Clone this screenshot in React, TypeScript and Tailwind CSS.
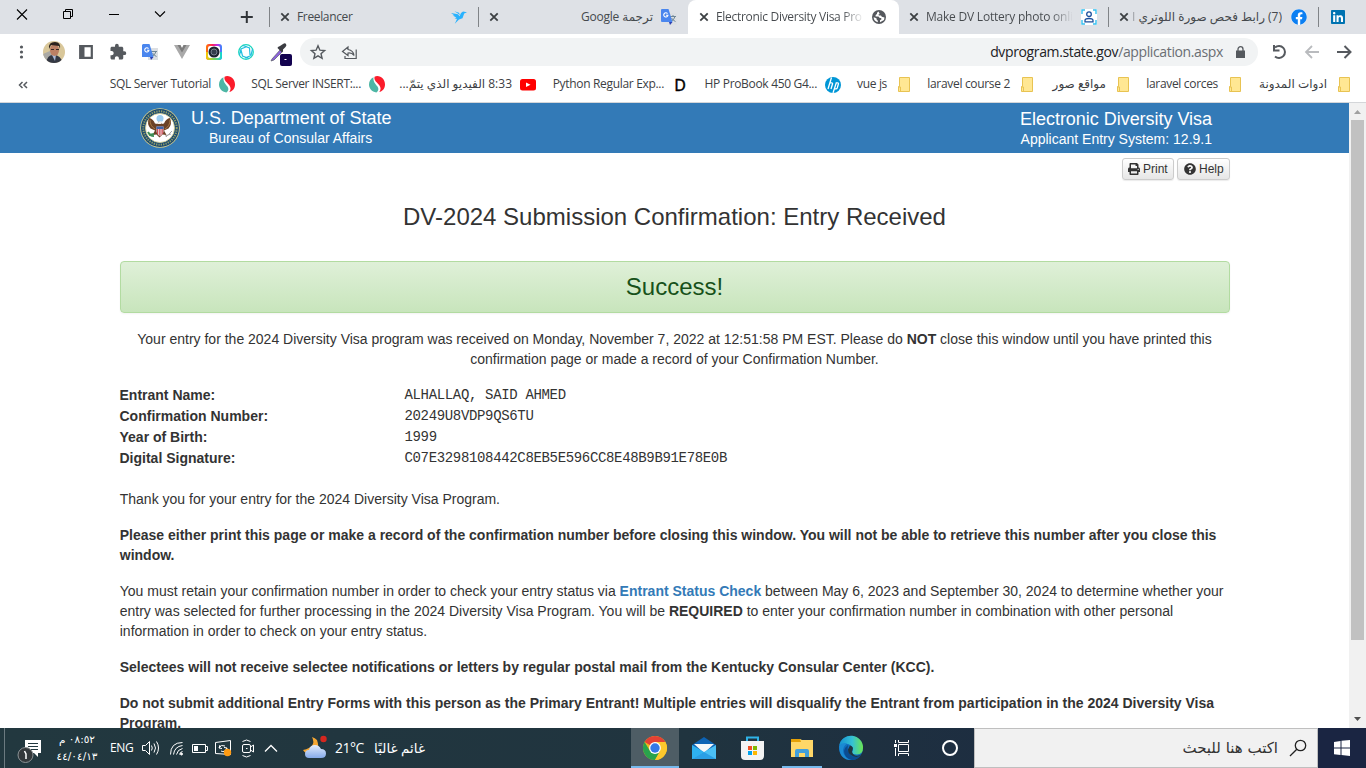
import React from "react";
import { FaPrint, FaQuestionCircle, FaFacebook, FaLinkedin } from "react-icons/fa";
import { MdExtension } from "react-icons/md";

type Kids = { children?: React.ReactNode };

const Close = () => (
  <svg width="10" height="10" viewBox="0 0 10 10" className="shrink-0" stroke="#3c4043" strokeWidth="1.8">
    <path d="M1.3 1.3 8.7 8.7M8.7 1.3 1.3 8.7" />
  </svg>
);

const Translate = () => (
  <svg width="16" height="16" viewBox="0 0 16 16" className="shrink-0">
    <rect x="6" y="4" width="10" height="12" rx="1" fill="#dcdfe3" />
    <path d="M9 7.500h6M12 6v1.5M14 7.500q-1 3.500-4 5M10.500 9q1.500 2.500 4 3.500" stroke="#6f8797" fill="none" />
    <path d="M8 13h3.500L9 16z" fill="#2c3fb0" />
    <path d="M1 0h6.500L11.500 13H1a1 1 0 0 1-1-1V1a1 1 0 0 1 1-1z" fill="#4a86ee" />
    <path d="M6.500 4.600A2.100 2.100 0 1 0 6.900 6.300H5" stroke="#fff" strokeWidth="1.100" fill="none" />
  </svg>
);

const Bird = () => (
  <svg width="16" height="13" viewBox="0 0 16 13" className="shrink-0" fill="#29b2fe">
    <path d="M0 2 7 3.200 8.500 5.300 10 2 12 .6 16 1.200 13.200 2.400 11.500 7.200 8 8.600 3.800 12.800 6 8 3.600 7.200 5.400 6.600 1.600 4.500 3.500 4.400z" />
    <path d="M3.500.2 8 1.700 9 4.200 7.200 2.800z" />
  </svg>
);

const Globe = () => (
  <svg width="14" height="14" viewBox="0 0 14 14" className="ml-auto shrink-0">
    <circle cx="7" cy="7" r="7" fill="#55585d" />
    <path d="M6.500 1.600 5 2.700 5 4 3.600 5v1.600h2.600q1.300.2 1.300 1.400h1.200q1 .2.800 1.200L8 10.300v2l4-2.200.5-2.700-2.700-.7-.8-1.300-2 .2L6.300 4.700l1.400-.8z" fill="#fff" />
    <path d="M1.600 7.300q1.800.1 3 1.300l.2 1.500 1 .5v1.700Q1.800 11.400 1.600 7.300z" fill="#fff" />
  </svg>
);

const PersonScan = () => (
  <svg width="16" height="16" viewBox="0 0 16 16" className="shrink-0">
    <rect width="16" height="16" fill="#fff" />
    <path d="M1 5V1h3M12 1h3v4M15 11v4h-3M4 15H1v-4" stroke="#35c0f0" strokeWidth="1.400" fill="none" />
    <circle cx="8" cy="5.200" r="2.300" stroke="#1b4f9c" strokeWidth="1.300" fill="none" />
    <path d="M4 12.800v-1.300q0-2 4-2t4 2v1.300z" stroke="#1b4f9c" strokeWidth="1.300" fill="none" />
  </svg>
);

const Swirl = () => (
  <svg width="16" height="17" viewBox="0 0 16 17" className="shrink-0">
    <path d="M4.500 1.300C1.500 2.600 0 5.300 0 8.500c0 4 2.800 7.300 7.300 8 2.200-1.300 2.800-3.700 1-6.200C6.500 8 3.800 5.500 4.500 1.300z" fill="#4db6a5" />
    <path d="M5.600.8C6.500.3 7.200.1 8.200.1 12.700.3 16 3.900 16 8.400s-3 7-5.700 7.500C12 14 12 11.700 10.300 9.300 8.300 6.600 4.500 4.500 5.600.8z" fill="#fb1c2b" />
  </svg>
);

const Folder = () => (
  <svg width="12" height="15" viewBox="0 0 12 15" className="shrink-0">
    <path d="M1.500.5h10v14h-11V9.500h1z" fill="#ffe793" stroke="#e8c352" />
    <path d="M.5 10h2v4.500" fill="none" stroke="#e8c352" />
  </svg>
);

const Seal = () => (
  <svg width="40" height="40" viewBox="0 0 40 40" className="ml-[140px] mt-[5px] shrink-0">
    <circle cx="20" cy="20" r="19.800" fill="#d9d08b" />
    <circle cx="20" cy="20" r="19" fill="#1c4a70" />
    <circle cx="20" cy="20" r="16.700" fill="none" stroke="#8f9d68" strokeWidth="2" strokeDasharray="1.300 1.100" />
    <circle cx="20" cy="20" r="14.500" fill="#fff" stroke="#d9d08b" strokeWidth=".8" />
    <circle cx="20" cy="10.500" r="3.500" fill="#9ccdf0" />
    <path d="M19 13.500q-1.500 1-1.300 2.500L15 15.500q-2-5-6-5.500-2.500 6 1.500 10.500l4.500 2-2.500 4.500 4-.5 3 3 3-3 4 .5-2.500-4.500 4.500-2q4-4.500 1.500-10.500-4 .5-6 5.500l-2.300.5q0-2.500-3.200-2.500z" fill="#6b4226" />
    <path d="M10 12q0 6 5 9M30 12q0 6-5 9" stroke="#a87945" fill="none" />
    <path d="M16.500 18.500h7V24q-1 3-3.500 4-2.500-1-3.500-4z" fill="#e8e3e4" />
    <path d="M17.500 21v5M19.300 21v6.500M21 21v6.500M22.700 21v5" stroke="#d13b48" strokeWidth=".9" />
    <path d="M16.500 18.500h7V21h-7z" fill="#3f62a8" />
    <path d="M8 24q2 4 6 4M9 27l5-1" stroke="#3e8d55" strokeWidth="2" fill="none" />
    <path d="M32 23l-6 6M31 26l-6 2" stroke="#a9a9a9" />
    <path d="M18 14.500l2-1.500 2 1-1 2h-3z" fill="#f4f1ea" />
  </svg>
);

function Tab({ w, children }: { w: string } & Kids) {
  return <div className={`flex h-[34px] shrink-0 items-center overflow-hidden whitespace-nowrap ${w}`}>{children}</div>;
}

function Mark({ w, t, children, rtl }: { w: string; t: string; rtl?: string } & Kids) {
  return (
    <div className={`flex shrink-0 items-center justify-end gap-2 whitespace-nowrap ${w}`}>
      <span dir={rtl ? "rtl" : "ltr"} className={rtl ? `relative -top-px font-['Open_Sans','DejaVu_Sans',sans-serif] ${rtl}` : "relative -top-px"}>{t}</span>
      {children}
    </div>
  );
}

function BrowserTabs() {
  return (
    <div className="flex h-[34px] bg-[#dee1e6] text-[12px] tracking-[-0.2px] text-[#45494d]">
      <svg width="269" height="34" viewBox="0 0 269 34" className="shrink-0" fill="none" stroke="#000">
        <path d="M17 9.500l10 10M27 9.500l-10 10" strokeWidth="1.100" />
        <path d="M63.500 11.500h7v7h-7zM65.500 11.500v-2h7v7h-2M109 14.500h10" />
        <path d="M155 11.500l5 5 5-5" strokeWidth="1.100" />
        <path d="M246.800 11v12M240.800 17h12" stroke="#303438" strokeWidth="2" />
      </svg>
      <div className="mt-[7px] h-5 w-px bg-[#808387]" />
      <Tab w="w-[208px] pl-[10px] pr-[11px]">
        <Close /><span className="ml-[7px] flex-1 tracking-[-0.350px]">Freelancer</span><Bird />
      </Tab>
      <div className="mt-[7px] h-5 w-px bg-[#808387]" />
      <Tab w="w-[209px] pl-[10px] pr-[11px]">
        <Close /><span dir="rtl" className="flex-1 pr-2 text-right">ترجمة Google</span><Translate />
      </Tab>
      <div className="flex h-[34px] w-[211px] shrink-0 items-center rounded-t-lg bg-white pl-[11px] pr-[13px]">
        <Close />
        <span className="ml-[7px] w-[148px] overflow-hidden whitespace-nowrap bg-linear-to-r from-[#45494d] from-85% to-transparent bg-clip-text tracking-[-0.300px] text-transparent">Electronic Diversity Visa Pro</span>
        <Globe />
      </div>
      <Tab w="w-[209px] pl-[10px] pr-[11px] rounded-bl-lg">
        <Close />
        <span className="ml-[7px] w-[147px] overflow-hidden bg-linear-to-r from-[#45494d] from-85% to-transparent bg-clip-text tracking-[-0.220px] text-transparent">Make DV Lottery photo onli</span>
        <span className="ml-auto"><PersonScan /></span>
      </Tab>
      <div className="mt-[7px] h-5 w-px bg-[#808387]" />
      <Tab w="w-[209px] pl-[10px] pr-[11px]">
        <Close />
        <span dir="rtl" className="ml-1 mr-[9px] flex-1 overflow-hidden text-[12px] tracking-[-0.300px]">(7) رابط فحص صورة اللوتري <span className="opacity-40">ا</span></span>
        <span className="rounded-full bg-white"><FaFacebook size={16} className="text-[#0c7ff2]" /></span>
      </Tab>
      <div className="mt-[7px] h-5 w-px bg-[#808387]" />
      <div className="ml-3 mt-[10px] flex h-[14px] w-[14px] items-center justify-center bg-white">
        <FaLinkedin size={16} className="shrink-0 text-[#0073b1]" />
      </div>
    </div>
  );
}

function Toolbar() {
  return (
    <div className="flex h-[34px] shrink-0 items-center bg-white pt-[2px]">
      <svg width="108" height="30" viewBox="0 0 108 30" className="shrink-0">
        <g fill="#55595e"><circle cx="21.500" cy="10" r="1.600" /><circle cx="21.500" cy="15" r="1.600" /><circle cx="21.500" cy="20" r="1.600" /></g>
        <clipPath id="face"><circle cx="54" cy="15" r="11" /></clipPath>
        <g clipPath="url(#face)">
          <rect x="43" y="3" width="22" height="24" fill="#d9c79a" />
          <path d="M43 17l7-3 7 12H43z" fill="#aaa9a5" />
          <path d="M46 27q1-10 8-9 7 0 9 9z" fill="#343844" />
          <path d="M52 18h4l-1 6z" fill="#a9b8d8" />
          <ellipse cx="54.500" cy="13" rx="4.600" ry="6" fill="#bb7f64" />
          <path d="M49 12q-1-7 6-7 6 0 5 7l-1-3-8-1z" fill="#2b211d" />
          <path d="M51 12.500h3M56 12.500h3" stroke="#3a2722" />
        </g>
        <path d="M80.200 9.200h11.600v11.600H80.200z" fill="none" stroke="#55595e" strokeWidth="2.200" />
        <path d="M80 9h4.500v12H80z" fill="#55595e" />
      </svg>
      <MdExtension size={18} className="ml-px shrink-0 text-[#55595e]" />
      <svg width="173" height="30" viewBox="127 0 173 30" className="shrink-0">
        <g transform="translate(142 7)">
          <rect x="6" y="4" width="10" height="12" fill="#dcdfe3" />
          <path d="M9 7.500h6M14 7.500q-1 3.500-4 5M10.500 9q1.500 2.500 4 3.500" stroke="#6f8797" fill="none" />
          <path d="M8 13h3.500L9 16z" fill="#2c3fb0" />
          <path d="M1 0h6.500L11.500 13H0V1z" fill="#4a86ee" />
          <path d="M6.500 4.600A2.100 2.100 0 1 0 6.900 6.300H5" stroke="#fff" strokeWidth="1.100" fill="none" />
        </g>
        <path d="M174 8h6l2 4 2-4h6l-8 14z" fill="#a9a9a9" />
        <path d="M177.500 8h3l1.500 3 1.500-3h3l-4.500 7.500z" fill="#7c7c7c" />
        <linearGradient id="rg" x1="0" y1="0" x2="1" y2="0"><stop stopColor="#ff7a00" /><stop offset=".4" stopColor="#ff1f5e" /><stop offset=".7" stopColor="#c02be6" /><stop offset="1" stopColor="#2f8fff" /></linearGradient>
        <linearGradient id="rg2" x1="0" y1="0" x2="1" y2="0"><stop stopColor="#ffc400" /><stop offset=".5" stopColor="#7bd85a" /><stop offset="1" stopColor="#11d3d8" /></linearGradient>
        <rect x="206" y="7" width="16" height="16" rx="3" fill="url(#rg)" />
        <path d="M206 15h16v5a3 3 0 0 1-3 3h-10a3 3 0 0 1-3-3z" fill="url(#rg2)" />
        <rect x="208" y="9" width="12" height="12" rx="2" fill="#fff" />
        <circle cx="214" cy="15" r="5.500" fill="#1d2430" /><circle cx="214" cy="15" r="3" fill="#343d4c" stroke="#8a92a0" strokeWidth=".8" />
        <g fill="none" stroke="#1ad6bd" strokeWidth="1.300"><circle cx="246" cy="15" r="7.300" /><path d="M243 8.500l6.500 2.500.5 7M252.500 12l-1.500 6.500-6 2.500M249 21.500l-6.500-2.500-1.500-6M239.500 18l1.500-6 6-2.500" stroke="#22bfe0" strokeWidth="1.200" /></g>
        <path d="M272 22l8-9 2 2-8 8-3 1z" fill="#8c62dc" stroke="#575b66" strokeWidth=".7" />
        <path d="M278 10l2-1 3-2q2-1.500 3 0t-.5 3l-2.500 2.500v2l-1 1-4.500-4.500z" fill="#3b3c42" />
        <rect x="280" y="17" width="12" height="12" rx="2" fill="#13024f" /><path d="M284.500 22.500h2" stroke="#fff" />
      </svg>
      <div className="flex h-7 w-[958px] items-center rounded-full bg-[#f1f3f4]">
        <svg width="60" height="28" viewBox="0 0 60 28" fill="none" stroke="#55595e" strokeWidth="1.400" className="shrink-0">
          <path d="M18 7.800l1.900 4.400 4.700.4-3.600 3.100 1.100 4.600-4.100-2.500-4.100 2.500 1.100-4.600-3.600-3.100 4.700-.4z" />
          <path d="M48 9l-5.500 4.500 5.500 4v-2.500q4-.5 6 2.500-.5-5-6-6zM45 18v2.500h11.200v-9" strokeWidth="1.200" />
        </svg>
        <span className="relative -top-px ml-auto text-[14px] tracking-[-0.370px] text-[#6a6e73]"><span className="text-[#202124]">dvprogram.state.gov</span>/application.aspx</span>
        <svg width="9" height="12" viewBox="0 0 9 12" className="mb-px ml-[13px] mr-[13px]"><path d="M0 4.500h9V12H0z" fill="#55595e" /><path d="M2 5V3.200a2.500 2.500 0 0 1 5 0V5" stroke="#55595e" strokeWidth="1.300" fill="none" /></svg>
      </div>
      <svg width="108" height="28" viewBox="0 0 108 28" fill="none" stroke="#55595e" strokeWidth="2" className="shrink-0">
        <path d="M17 9.500A6 6 0 1 1 17 18.500" /><path d="M16 7v5.500h5.500" />
        <path d="M61 14H48.500M54 8l-6 6 6 6" stroke="#b9bbbe" strokeWidth="1.800" />
        <path d="M79 14h13M86.500 8l6 6-6 6" />
      </svg>
    </div>
  );
}

function Bookmarks() {
  return (
    <div className="flex h-[35px] items-center border-b border-[#d4d6d9] bg-white pb-[1px] text-[12px] tracking-[-0.320px] text-[#3c4043]">
      <svg width="30" height="10" viewBox="0 0 30 10" fill="none" stroke="#55595e" strokeWidth="1.500" className="shrink-0"><path d="M22.500 2l-3 3 3 3M27 2l-3 3 3 3" /></svg>
      <Mark w="w-[205px]" t="SQL Server Tutorial"><Swirl /></Mark>
      <Mark w="w-[150px]" t="SQL Server INSERT:..."><Swirl /></Mark>
      <Mark w="w-[151px]" t="8:33 الفيديو الذي يتمّ..." rtl="text-[12px] tracking-[-0.480px]">
        <svg width="16" height="12" viewBox="0 0 16 12" className="shrink-0"><rect width="16" height="11.500" rx="2.500" fill="#f00" /><path d="M6 3.500l4.500 2.300L6 8z" fill="#fff" /></svg>
      </Mark>
      <Mark w="w-[152px]" t="Python Regular Exp..."><span className="w-4 text-center font-['Noto_Sans',sans-serif] text-[16px] leading-4 text-black [-webkit-text-stroke:0.4px_black]">D</span></Mark>
      <Mark w="w-[153px]" t="HP ProBook 450 G4...">
        <svg width="16" height="16" viewBox="0 0 16 16" className="shrink-0" fill="none" stroke="#fff" strokeWidth="1.300">
          <circle cx="8" cy="8" r="8" fill="#0096d6" stroke="none" />
          <path d="M6.500.5L3 12M5 5.800h1.500q1.300 0 1 1.200L6 12M11.500 5.200L8 16M11 5.800h1.500q1.200 0 .9 1.200L12.200 11q-.3.800-1.200.8H9.500" />
        </svg>
      </Mark>
      <div className="flex gap-0 [&>div]:gap-[11px]">
        <Mark w="w-[69px]" t="vue js"><Folder /></Mark>
        <Mark w="w-[123px]" t="laravel course 2"><Folder /></Mark>
        <Mark w="w-[96px]" t="مواقع صور" rtl="text-[12px] tracking-[-0.200px]"><Folder /></Mark>
        <Mark w="w-[112px]" t="laravel corces"><Folder /></Mark>
        <Mark w="w-[109px]" t="ادوات المدونة" rtl="text-[12px] tracking-[-0.200px]"><Folder /></Mark>
      </div>
    </div>
  );
}

function Row({ k, v }: { k: string; v: string }) {
  return (
    <div className="flex h-[21px] items-center pb-px">
      <dt className="w-[285px] font-bold">{k}</dt>
      <dd className="pb-px font-['Liberation_Mono',monospace] text-[14px] tracking-[-0.340px]">{v}</dd>
    </div>
  );
}

const btn = "flex h-[22px] items-center rounded-[3px] border border-[#ccc] bg-linear-to-b from-white to-[#e6e6e6] text-[12px] text-[#333] shadow-[0_1px_1px_rgba(0,0,0,0.08)]";

function Page() {
  return (
    <div className="flex h-[625px] overflow-hidden bg-white">
      <main className="w-[1349px] shrink-0 font-['Liberation_Sans',Arial,sans-serif] text-[14px] leading-5 text-[#333]">
        <header className="flex h-[50px] bg-[#337ab7] text-white">
          <Seal />
          <div className="ml-[11px] mt-1 whitespace-nowrap"><div className="text-[18px] leading-[22px] tracking-[-0.030px]">U.S. Department of State</div><div className="ml-[18px] leading-[18px]">Bureau of Consular Affairs</div></div>
          <div className="ml-auto mr-[137px] mt-[5px] whitespace-nowrap text-right"><div className="text-[18px] leading-[22px] tracking-[-0.030px]">Electronic Diversity Visa</div><div className="leading-[18px]">Applicant Entry System: 12.9.1</div></div>
        </header>
        <div className="mx-[120px] w-[1110px]">
          <div className="flex justify-end gap-[3px] pt-[5px]">
            <button className={`${btn} w-[52px] gap-[3px] pl-[5px]`}><FaPrint size={12} />Print</button>
            <button className={`${btn} w-[53px] gap-[3px] pl-[6px]`}><FaQuestionCircle size={12} />Help</button>
          </div>
          <h1 className="mt-[22px] pr-px text-center text-[24px] leading-[30px]">DV-2024 Submission Confirmation: Entry Received</h1>
          <div className="mt-[29px] flex h-[52px] items-center justify-center rounded border border-[#b2dba1] bg-linear-to-b from-[#dff0d8] to-[#c8e5bc] pr-px text-[24px] text-[#17511a] shadow-[0_1px_2px_rgba(0,0,0,0.05)]">Success!</div>
          <p className="mt-4 pr-px text-center">Your entry for the 2024 Diversity Visa program was received on Monday, November 7, 2022 at 12:51:58 PM EST. Please do <b>NOT</b> close this window until you have printed this<br />confirmation page or made a record of your Confirmation Number.</p>
          <dl className="-ml-[0.500px] mt-4">
            <Row k="Entrant Name:" v="ALHALLAQ, SAID AHMED" />
            <Row k="Confirmation Number:" v="20249U8VDP9QS6TU" />
            <Row k="Year of Birth:" v="1999" />
            <Row k="Digital Signature:" v="C07E3298108442C8EB5E596CC8E48B9B91E78E0B" />
          </dl>
          <div className="-ml-[0.250px] mt-5 flex flex-col gap-4 whitespace-nowrap">
            <p>Thank you for your entry for the 2024 Diversity Visa Program.</p>
            <p className="font-bold">Please either print this page or make a record of the confirmation number before closing this window. You will not be able to retrieve this number after you close this<br />window.</p>
            <p>You must retain your confirmation number in order to check your entry status via <b className="text-[#337ab7]">Entrant Status Check</b> between May 6, 2023 and September 30, 2024 to determine whether your<br />entry was selected for further processing in the 2024 Diversity Visa Program. You will be <b>REQUIRED</b> to enter your confirmation number in combination with other personal<br />information in order to check on your entry status.</p>
            <p className="font-bold">Selectees will not receive selectee notifications or letters by regular postal mail from the Kentucky Consular Center (KCC).</p>
            <p className="font-bold">Do not submit additional Entry Forms with this person as the Primary Entrant! Multiple entries will disqualify the Entrant from participation in the 2024 Diversity Visa<br />Program.</p>
          </div>
        </div>
      </main>
      <div className="flex w-[17px] flex-col items-center bg-[#f1f1f1]">
        <svg width="17" height="17" viewBox="0 0 17 17"><path d="M5 11l3.500-4L12 11z" fill="#a0a0a0" /></svg>
        <div className="h-[520px] w-[13px] bg-[#c1c1c1]" />
        <svg width="17" height="17" viewBox="0 0 17 17" className="mt-auto"><path d="M5 6l3.500 4L12 6z" fill="#505050" /></svg>
      </div>
    </div>
  );
}

function Taskbar() {
  return (
    <div className="flex h-10 bg-linear-to-r from-[#22383f] via-[#20343f] to-[#1a2542] text-white">
      <svg width="50" height="40" viewBox="0 0 50 40" className="shrink-0">
        <path d="M4.500 0v40" stroke="#6b7a80" />
        <path d="M25 12h16v13h-3v4l-4-4h-9z" fill="#fff" />
        <path d="M28 15.500h10M28 18.500h10M31 21.500h7" stroke="#22383f" />
        <circle cx="25.500" cy="27" r="7.500" fill="#33383b" stroke="#8b9295" /><path d="M24.500 23l1.500 3v5" stroke="#fff" fill="none" strokeWidth="1.500" />
      </svg>
      <div className="flex w-[54px] shrink-0 flex-col items-center whitespace-nowrap pt-[3px] font-['DejaVu_Sans',sans-serif] text-[10.500px] leading-[17px] tracking-[-0.400px]">
        <span dir="rtl">٠٨:٥٢ م</span><span dir="ltr">٤٤/٠٤/١٣</span>
      </div>
      <span className="ml-[6px] w-[31px] shrink-0 text-[12px] leading-[39px] tracking-[-0.400px]">ENG</span>
      <svg width="155" height="40" viewBox="0 0 155 40" className="shrink-0" fill="none" stroke="#fff">
        <path d="M1.500 17.500h3l4-4v13l-4-4h-3zM10.500 17.500q1.500 2.500 0 5M13 15.500q3 4.500 0 9M15.500 13.500q4 6.500 0 13" />
        <path d="M29.500 26.500q0-12 12-12M32.500 26.500q1-8 9-9M35.500 26.500q1-5 6-6M38.500 26.500q.5-2.500 3-3" />
        <circle cx="40.500" cy="26" r="1" fill="#fff" />
        <path d="M51.500 16.500h13v8h-13zM64.500 18.500h2v4h-2" /><path d="M53 18h4v5h-4z" fill="#fff" stroke="none" />
        <path d="M74.500 14.500l15-2v14l-15-1zM79 17l-1 3 3 .5M85 23l1-3-3-.5M78 20q2-4 6-2M86 20q-2 5-6 3" />
        <circle cx="86.500" cy="24.500" r="3.700" fill="#ff9b13" stroke="none" />
        <rect x="101.500" y="16.500" width="8" height="8" rx="1.500" /><path d="M109.500 19l3-2v7l-3-2M101.500 13.500q4-3 8 0M101.500 27.500q4 3 8 0" /><path d="M105 20.500h1.500" />
        <path d="M124 23.500l6-6 6 6" strokeWidth="1.300" />
      </svg>
      <svg width="26" height="40" viewBox="0 0 26 40" className="ml-[6px] shrink-0">
        <path d="M10 9q5 10-9 13 3 5 9 4 9-2 5-14-2-2-5-3z" fill="#f5a733" />
        <linearGradient id="cl" x2="0" y2="1"><stop stopColor="#e3edfd" /><stop offset="1" stopColor="#85aaea" /></linearGradient>
        <path d="M7 30a4 4 0 0 1 0-8q1-5 6-5 4 0 6 4 5 0 5 4.500T19 30z" fill="url(#cl)" />
        <circle cx="21.500" cy="11" r="3.200" fill="#d5271f" />
      </svg>
      <span className="ml-[7px] w-[30px] shrink-0 whitespace-nowrap text-[14px] leading-[40px] tracking-[-0.500px]">21°C</span>
      <span dir="rtl" className="ml-[7px] w-[53px] shrink-0 whitespace-nowrap text-[13.500px] leading-[40px] tracking-[-0.200px]">غائم غالبًا</span>
      <svg width="342" height="40" viewBox="0 0 342 40" className="ml-auto shrink-0">
        <path d="M0 0h48v40H0z" fill="#4e5d65" /><path d="M0 38h48v2H0zM151 38h40v2h-40z" fill="#76b9ed" />
        <circle cx="24" cy="20" r="12" fill="#e9ba20" />
        <path d="M24 20L13.600 14A12 12 0 0 1 34.400 14z" fill="#e44134" />
        <path d="M13.600 14A12 12 0 0 0 24 32l5-9-10 0z" fill="#29a34c" />
        <path d="M24 14h10.400A12 12 0 0 1 24 32l5.200-9z" fill="#fdc82c" />
        <circle cx="24" cy="20" r="5.900" fill="#fff" /><circle cx="24" cy="20" r="4.700" fill="#3478e8" />
        <path d="M61 17l12-8 12 8v14H61z" fill="#0d63b4" /><path d="M63 16h20l-10 9z" fill="#f5f7f8" /><path d="M61 17l12 7v7H61z" fill="#2eb1f0" /><path d="M85 17L61 31h24z" fill="#4bc0f5" /><path d="M61 31l12-7 12 7z" fill="#2a9fe6" />
        <path d="M116 14V9.500h11V14" fill="none" stroke="#2fb3e8" strokeWidth="2" />
        <path d="M110 13h23v15q0 4-4 4h-15q-4 0-4-4z" fill="#f3f3f3" />
        <path d="M117 18h4v4h-4z" fill="#f04e24" /><path d="M122 18h4v4h-4z" fill="#7eb900" /><path d="M117 23h4v4h-4z" fill="#00a3ee" /><path d="M122 23h4v4h-4z" fill="#fdb800" />
        <path d="M160 11h9l2 1h11v17h-22z" fill="#ffd768" /><path d="M160 11h9l1 3h-10z" fill="#e6a107" /><path d="M164 29v-6q0-2 2-2h10q2 0 2 2v6h-4v-4h-6v4z" fill="#429fdc" />
        <linearGradient id="eg" x2="1"><stop stopColor="#1592d2" /><stop offset=".55" stopColor="#35c1d5" /><stop offset="1" stopColor="#6ce650" /></linearGradient>
        <circle cx="220" cy="20" r="12" fill="#106ebe" />
        <path d="M221 24q2-3-.5-6-5-4-12.300-.5A12 12 0 0 1 232 20q0 6-6 6.500-5 0-5-2.500z" fill="url(#eg)" />
        <path d="M208.200 18q3-4 8-2.500-5 3-4 9 2 6 8 7.500-12 0-12-14z" fill="#1b8ad3" />
        <path d="M217 17q-2 7 4 11 5 2 9-1-3 5-9 5-8-2-8-9 1-4 4-6z" fill="#0b4c91" />
        <path d="M219 17.500q4 1 2.500 4.500-1.500 3 2.500 5.500 4 1 6.800-1.500-3 4-8 2.500-6-2-5.800-7z" fill="#20343f" />
        <path d="M267.500 16.500h10v7h-10zM267.500 12v2.500h10V12M267.500 28v-2.500h10V28M264.500 12v3M264.500 20v8" fill="none" stroke="#fff" /><path d="M263 16h3v3h-3z" fill="#fff" />
        <circle cx="319" cy="20" r="7" fill="none" stroke="#fff" strokeWidth="2" />
      </svg>
      <div className="ml-px flex w-[344px] shrink-0 items-center justify-end border border-[#bfbfbf] bg-[#f1f1f1] pr-[10px] text-[#333]">
        <span dir="rtl" className="pt-px font-['DejaVu_Sans',sans-serif] text-[15px] tracking-[-0.250px]">اكتب هنا للبحث</span>
        <svg width="18" height="18" viewBox="0 0 18 18" className="ml-[11px]" fill="none" stroke="#222" strokeWidth="1.300"><circle cx="11.500" cy="6.500" r="5.200" /><path d="M7.800 10.200L1 17" /></svg>
      </div>
      <svg width="48" height="40" viewBox="0 0 48 40" className="shrink-0" fill="#fff"><rect width="48" height="40" fill="#1a2542" /><path d="M16 14l6.500-1v6.500H16zM23.500 12.800L32 12v7.500h-8.500zM16 20.500h6.500V27l-6.500-.8zM23.500 20.500H32V28l-8.500-1z" /></svg>
    </div>
  );
}

export default function App() {
  return (
    <div className="h-[768px] w-[1366px] overflow-hidden bg-white font-['Open_Sans','DejaVu_Sans',sans-serif]">
      <BrowserTabs />
      <Toolbar />
      <Bookmarks />
      <Page />
      <Taskbar />
    </div>
  );
}
